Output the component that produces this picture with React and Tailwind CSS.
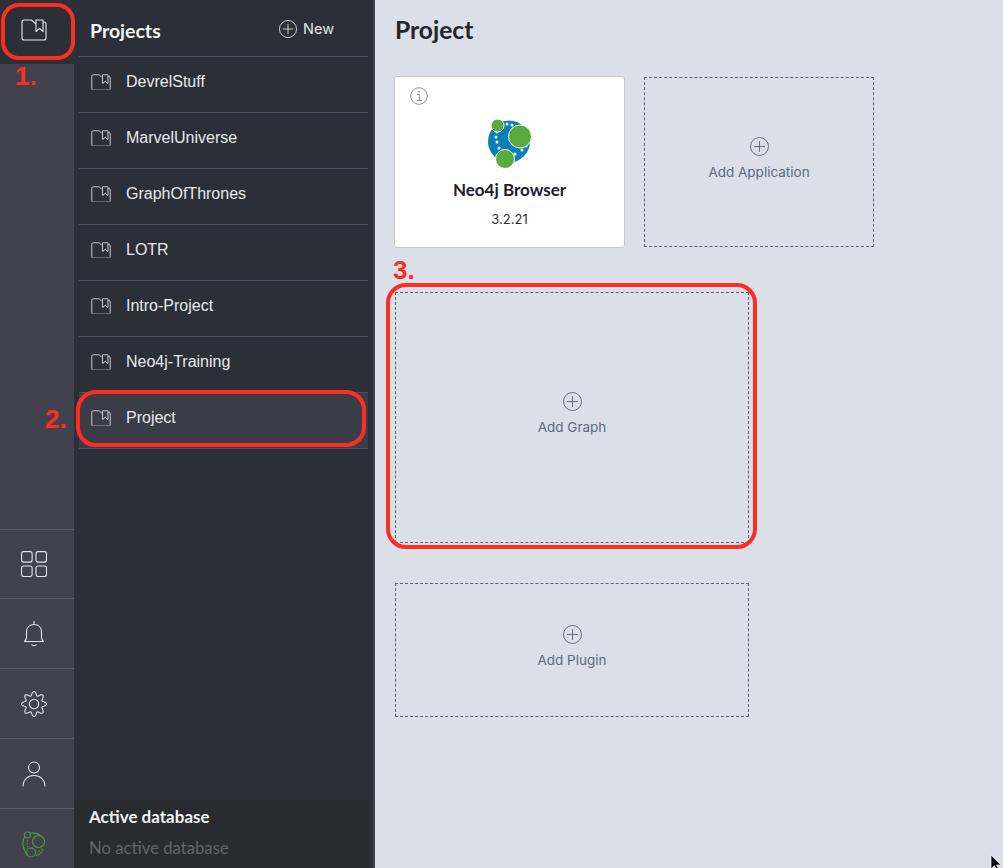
import React from "react";

const lato = "font-['Lato','Noto_Sans',sans-serif]";

function FolderIcon({ size = 26, className = "" }) {
  return (
    <svg width={size} height={(size * 22) / 26} viewBox="0 0 26 22" fill="none" stroke="currentColor" strokeWidth={size < 24 ? 1.300 : 1.100} strokeLinejoin="round" className={className}>
      <path d="M15 5 10.500 1H3a2 2 0 0 0-2 2v16a2 2 0 0 0 2 2h20a2 2 0 0 0 2-2V5a2 2 0 0 0-2-2h-1" />
      <path d="M15 1h7v11.500l-3.500-3-3.500 3z" />
    </svg>
  );
}

function PlusCircle({ size = 19, className = "" }) {
  return (
    <svg width={size} height={size} viewBox="0 0 19 19" fill="none" stroke="currentColor" strokeWidth="0.900" className={className}>
      <circle cx="9.500" cy="9.500" r="9" />
      <path d="M9.500 4v11M4 9.500h11" />
    </svg>
  );
}

function GridIcon() {
  return (
    <svg width="26" height="26" viewBox="0 0 26 26" fill="none" stroke="currentColor" strokeWidth="1.100">
      <rect x="0.600" y="0.600" width="10.500" height="10.500" rx="2" />
      <rect x="15" y="0.600" width="10.500" height="10.500" rx="2" />
      <rect x="0.600" y="15" width="10.500" height="10.500" rx="2" />
      <rect x="15" y="15" width="10.500" height="10.500" rx="2" />
    </svg>
  );
}

function BellIcon() {
  return (
    <svg width="20" height="26" viewBox="0 0 20 26" fill="none" stroke="currentColor" strokeWidth="1.100">
      <path d="M10 0v3.500M10 3.500c-4.500 0-7.500 3-7.500 7.500v5.500c0 2-1.500 3.500-2 4h19c-.5-.5-2-2-2-4V11c0-4.500-3-7.500-7.500-7.500z" strokeLinejoin="round" />
      <path d="M7.500 23.500c1.200 1.500 3.800 1.500 5 0" />
    </svg>
  );
}

function GearIcon() {
  const n = 8;
  let d = "";
  for (let i = 0; i < n * 24; i++) {
    const a = (i / (n * 24)) * Math.PI * 2;
    const r = 10.500 + 2 * Math.cos(a * n);
    const x = 13 + r * Math.cos(a - Math.PI / 2);
    const y = 13 + r * Math.sin(a - Math.PI / 2);
    d += (i === 0 ? "M" : "L") + x.toFixed(2) + " " + y.toFixed(2);
  }
  return (
    <svg width="26" height="26" viewBox="0 0 26 26" fill="none" stroke="currentColor" strokeWidth="1.100">
      <path d={d + "Z"} strokeLinejoin="round" />
      <circle cx="13" cy="13" r="4.700" />
    </svg>
  );
}

function UserIcon() {
  return (
    <svg width="24" height="26" viewBox="0 0 24 26" fill="none" stroke="currentColor" strokeWidth="1.100">
      <circle cx="12" cy="6.500" r="5.500" />
      <path d="M1 25.500c0-6.500 4.500-11 11-11s11 4.500 11 11" />
    </svg>
  );
}

function RailLogo() {
  return (
    <svg width="24" height="27" viewBox="0 0 24 27" fill="none" stroke="#4c9a3c" strokeWidth="1.100">
      <path d="M3 5C1 8 .5 12 1.500 16c1 4 2.500 7 5 9" />
      <path d="M8 2c4-.5 8 .5 11 3" />
      <path d="M13.500 24.500c3-.5 6-2.500 8-6" />
      <circle cx="5.500" cy="4" r="3" />
      <circle cx="16.500" cy="10.500" r="6" />
      <circle cx="9" cy="21.500" r="4.500" />
      <path d="M5.500 9c-1 3-.5 5.500 1 8M20 17.500c-1 1.500-3 3-5 3.500" strokeDasharray="1.500 1.500" />
    </svg>
  );
}

function NeoLogo() {
  const dots = [[507,124],[512,125],[516,127],[497,132],[496,137],[497,142],[499,148],[515,154],[522,150],[526,146]];
  return (
    <svg width="46" height="50" viewBox="488 118 46 50">
      <circle cx="509" cy="141.500" r="21" fill="#0b80b7" />
      {dots.map(([x, y], i) => <circle key={i} cx={x} cy={y} r="1.500" fill="#fff" />)}
      <circle cx="497.500" cy="125.500" r="6.500" fill="#5aab3e" stroke="#fff" strokeWidth="1" />
      <circle cx="520" cy="136.500" r="11.500" fill="#5aab3e" stroke="#fff" strokeWidth="1" />
      <circle cx="505" cy="159" r="9.500" fill="#5aab3e" stroke="#fff" strokeWidth="1" />
    </svg>
  );
}

function RailItem({ children }) {
  return <div className="h-[70px] flex items-center justify-center border-t border-[#585c68] text-[#e4e6ea] pr-[6px]">{children}</div>;
}

function ProjectRow({ name, active }) {
  return (
    <div className={`h-14 flex items-center border-b border-[#4c505b] pl-[12px] pb-[5px] ${active ? "bg-[#3a3d47]" : ""}`}>
      <FolderIcon size={20} className="text-[#c8cacf] mr-[15px]" />
      <span className="text-base leading-[24px] text-[#e8e9ec] font-['Liberation_Sans',sans-serif]">{name}</span>
    </div>
  );
}

function AddBox({ label, className }) {
  return (
    <div className={`flex flex-col items-center justify-center border border-dashed border-[#5b6472] text-[#5b6b7c] font-['Inter',sans-serif] text-[13.500px] leading-[18px] ${className}`}>
      <PlusCircle className="text-[#5f6570] mb-[7px]" />
      <span>{label}</span>
    </div>
  );
}

export default function App() {
  const projects = ["DevrelStuff", "MarvelUniverse", "GraphOfThrones", "LOTR", "Intro-Project", "Neo4j-Training", "Project"];
  return (
    <div className="relative flex h-[868px] w-[1003px] overflow-hidden bg-[#dbdfe8]">
      {/* Rail */}
      <div className="w-[74px] shrink-0 flex flex-col bg-[#42424e]">
        <div className="h-[64px] bg-[#2c2f38] flex items-center justify-center text-[#e4e6ea] pb-[4px] pr-[6px]">
          <FolderIcon size={26} />
        </div>
        <div className="flex-1" />
        <div className="h-[69px] flex items-center justify-center border-t border-[#585c68] text-[#e4e6ea] pr-[6px]"><GridIcon /></div>
        <RailItem><BellIcon /></RailItem>
        <RailItem><GearIcon /></RailItem>
        <RailItem><UserIcon /></RailItem>
        <div className="h-[60px] flex items-center justify-center border-t border-[#585c68] pr-[6px] pt-[12px]"><RailLogo /></div>
      </div>

      {/* Projects panel */}
      <div className="w-[301px] shrink-0 flex flex-col bg-[#2c2f38] border-r-2 border-[#3f444f]">
        <div className="h-[57px] ml-[5px] mr-[5px] pl-[11px] pr-[34px] border-b border-[#4c505b] flex items-center justify-between">
          <span className={`${lato} text-[19.500px] font-bold text-[#f2f3f5] mt-[5px]`}>Projects</span>
          <span className="flex items-center gap-[6px] text-[#e4e6ea] mt-[1px]">
            <PlusCircle size={18} />
            <span className="font-['Inter',sans-serif] text-[14.500px]">New</span>
          </span>
        </div>
        <div className="ml-[5px] mr-[5px]">
          {projects.map((p) => <ProjectRow key={p} name={p} active={p === "Project"} />)}
        </div>
        <div className="flex-1" />
        <div className="h-[68px] mr-[4px] bg-[#292b30] pl-[15px] pt-[5px]">
          <div className={`${lato} text-[17px] font-bold leading-[24px] text-[#f2f3f5]`}>Active database</div>
          <div className={`${lato} text-[16.700px] leading-[24px] mt-[7px] text-[#62666d]`}>No active database</div>
        </div>
      </div>

      {/* Main */}
      <div className="flex-1 pl-5 flex flex-col items-start">
        <h1 className={`${lato} text-[24.600px] font-bold leading-[30px] text-[#22252c] mt-[15px]`}>Project</h1>
        <div className="flex items-start mt-[31px] -ml-px">
          <div className="relative w-[231px] h-[172px] bg-white border border-[#c4c8d0] rounded-[3px] flex flex-col items-center">
            <svg width="18" height="18" viewBox="0 0 18 18" fill="none" stroke="#858585" strokeWidth="0.900" className="absolute left-[15px] top-[10px]">
              <circle cx="9" cy="9" r="8.300" />
              <path d="M7 7.500h2.300V13.500M6.500 13.500h5.500M7.800 4.500h1.500v1.200" />
            </svg>
            <div className="mt-[41px] ml-[3px]"><NeoLogo /></div>
            <div className={`${lato} text-[17px] font-bold leading-[22px] text-[#1c2028] mt-[11px]`}>Neo4j Browser</div>
            <div className="font-['Inter',sans-serif] text-[13px] leading-[18px] text-[#2c3038] mt-[9px]">3.2.21</div>
          </div>
          <AddBox label="Add Application" className="w-[230px] h-[170px] ml-[19px] mt-px pb-[7px]" />
        </div>
        <AddBox label="Add Graph" className="w-[354px] h-[251px] mt-[44px] pb-[7px]" />
        <AddBox label="Add Plugin" className="w-[354px] h-[134px] mt-[40px] pb-[6px]" />
      </div>

      {/* Annotations */}
      <div className="absolute left-[1px] top-[3px] w-[74px] h-[57px] rounded-[18px] border-4 border-[#ff2d20]" />
      <div className="absolute left-[76px] top-[390px] w-[290px] h-[57px] rounded-[20px] border-4 border-[#ff2d20]" />
      <div className="absolute left-[386px] top-[283px] w-[371px] h-[266px] rounded-[20px] border-4 border-[#ff2d20]" />
      <span className="absolute left-[15px] top-[61px] text-[26px] leading-[30px] font-bold text-[#ff2d20] font-['Liberation_Sans',sans-serif]">1.</span>
      <span className="absolute left-[45px] top-[404px] text-[26px] leading-[30px] font-bold text-[#ff2d20] font-['Liberation_Sans',sans-serif]">2.</span>
      <span className="absolute left-[393px] top-[255px] text-[26px] leading-[30px] font-bold text-[#ff2d20] font-['Liberation_Sans',sans-serif]">3.</span>

      {/* Cursor */}
      <svg width="12" height="18" viewBox="0 0 12 18" className="absolute left-[990px] top-[854px]">
        <path d="M1 1v14l3.500-3.500 2.500 5.500 2-1-2.500-5H11z" fill="#000" stroke="#fff" strokeWidth="0.700" />
      </svg>
    </div>
  );
}
